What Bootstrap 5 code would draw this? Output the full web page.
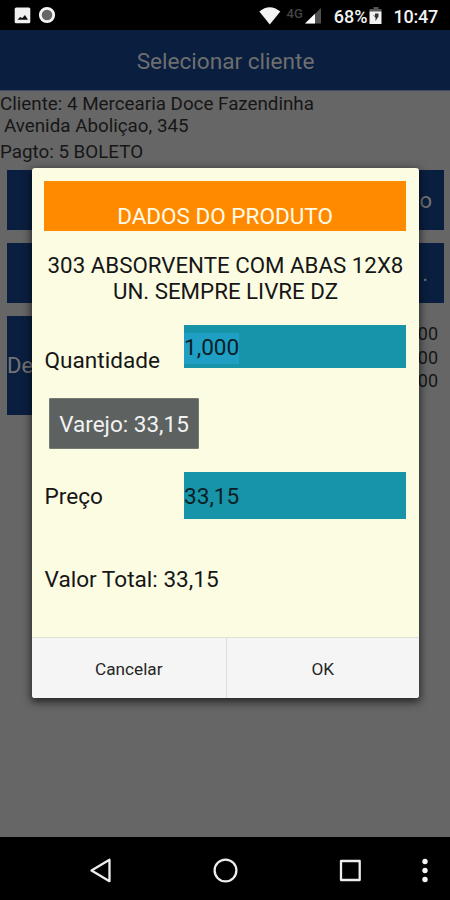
<!DOCTYPE html>
<html lang="pt-BR">
<head>
<meta charset="utf-8">
<meta name="viewport" content="width=device-width, initial-scale=1">
<title>Selecionar cliente</title>
<link href="https://cdn.jsdelivr.net/npm/bootstrap@5.3.0/dist/css/bootstrap.min.css" rel="stylesheet">
<style>
  body { font-family: Roboto, "Liberation Sans", sans-serif; background: #666; color: #161616; }
  .phone { width: 450px; height: 900px; background: #666; }
  .status-bar { height: 30px; padding: 0 12px 0 14px; background: #000; color: #f2f2f2; }
  .clock-text { font-size: 18px; font-weight: 500; line-height: 30px; padding-top: 2px; }
  .clock-text:last-child { letter-spacing: -.25px; }
  .net-label { font-size: 13px; font-weight: 500; line-height: 12px; color: #454545; margin-left: -4px; }
  .app-bar { height: 60px; background: #0a1f40; color: #6e6e6e; font-size: 22.6px; padding: 3px 0 0 1px; box-shadow: 0 1px 0 #3c4a68; }
  .client-info { height: 80px; padding: 3px 0 0 0; font-size: 18.8px; line-height: 22px; }
  .action-list { padding: 0 6px 0 7px; gap: 13px; }
  .blue-btn { height: 60px; background: #0a1f40; color: #737373; font-size: 22px; border-radius: 0; padding: 0; border: 0; }
  .blue-btn.tall { height: 99px; }
  .totals { font-size: 18px; line-height: 23.7px; padding: 6px 6px 0 0; }
  .nav-keys { height: 63px; background: #000; }
  .dialog-box { left: 32px; top: 168px; width: 387px; height: 530px; background: #fcfce3; border-radius: 3px; box-shadow: 0 3px 9px 1px rgba(0,0,0,.65); overflow: hidden; font-size: 22.6px; }
  .dialog-main { padding: 13px 13px 0 12px; height: 469px; }
  .dialog-title { height: 50px; background: #ff8a00; color: #fffbe8; font-size: 22.5px; line-height: 28px; padding-bottom: 1px; }
  .product-name { font-size: 22.3px; line-height: 26px; margin-top: 21px; padding-left: 1px; }
  .field-label { width: 140px; padding-left: .5px; }
  .field-box { background: #1894a8; color: #082024; line-height: 1; padding-top: 4px; }
  .qty-row { height: 43px; margin-top: 21px; }
  .qty-row .field-label { padding-top: 28px; }
  .picked { background: #209fc4; padding: 4px 0 4px; }
  .price-tag { width: 150px; height: 51px; margin: 30px 0 0 5px; background: #5d6260; color: #f2f2f2; border-radius: 1px; font-size: 22.5px; padding: 2px 0 0; border: 1px solid #747972; }
  .price-row { height: 47px; margin-top: 23px; }
  .price-row .field-label { padding-top: 3px; }
  .total-line { margin-top: 45px; line-height: 32px; padding-left: .5px; }
  .dialog-actions { height: 61px; background: #f5f5f5; border-top: 1px solid #dfe0d1; font-size: 17.2px; }
  .dialog-actions button { background: transparent; border: 0; color: #252525; padding-top: 4px; }
  .dialog-actions button + button { border-left: 1px solid #dedede; }
</style>
<script src="https://cdn.jsdelivr.net/npm/bootstrap@5.3.0/dist/js/bootstrap.bundle.min.js"></script>
</head>
<body>
<div class="phone position-relative d-flex flex-column overflow-hidden">
  <div class="status-bar d-flex justify-content-between">
    <svg width="44" height="30" viewBox="14 0 44 30">
      <rect x="14.7" y="7.5" width="15.6" height="15.7" rx="1.5" fill="#f0f0f0"/>
      <path d="M17.500 19.800l2.500-2.800 2.300 1 2.700-3 3 4.800z" fill="#111"/>
      <circle cx="47" cy="15" r="6.700" fill="#666" stroke="#f5f5f5" stroke-width="2.800"/>
    </svg>
    <div class="d-flex">
      <svg width="29" height="30" viewBox="258 0 29 30"><path d="M259.300 11.500Q269.700 3 280.300 11.500L269.800 24.500Z" fill="#f3f3f3"/></svg>
      <span class="net-label ps-1 pt-2">4G</span>
      <svg width="31" height="30" viewBox="304 0 31 30"><path d="M306 23.500L322 8V23.500Z" fill="#505050"/><path d="M306 23.500L316 13.800V23.500Z" fill="#fff"/></svg>
      <span class="clock-text">68%</span>
      <svg width="26" height="30" viewBox="368.500 0 26 30"><path d="M370 9h4V7h5v2h3v3h-12z" fill="#555"/><path d="M370 11.500h12V24h-12z" fill="#f2f2f2"/><path d="M373 14.500l2.500 1.500v-2.500h3.500v3l-3 4.500v-3.500z" fill="#333"/></svg>
      <span class="clock-text">10:47</span>
    </div>
  </div>
  <header class="app-bar d-flex align-items-center justify-content-center">Selecionar cliente</header>
  <div class="client-info">
    <div>Cliente: 4 Mercearia Doce Fazendinha</div>
    <div class="ps-1">Avenida Aboliçao, 345</div>
    <div class="pt-1">Pagto: 5 BOLETO</div>
  </div>
  <div class="action-list d-flex flex-column flex-grow-1">
    <button class="btn blue-btn w-100 text-end pe-2"><span class="pe-1">o</span></button>
    <button class="btn blue-btn w-100 text-end pe-3">.</button>
    <div class="d-flex justify-content-between">
      <button class="btn blue-btn tall w-50 text-start">De</button>
      <div class="totals text-end"><div>0,00</div><div>0,00</div><div>0,00</div></div>
    </div>
  </div>
  <nav class="nav-keys">
    <svg width="450" height="63" viewBox="0 837 450 63" fill="none" stroke="#ededed" stroke-width="2.300">
      <path d="M91.500 870.500L109.500 859.800V881.200Z" stroke-linejoin="round"/>
      <circle cx="225.500" cy="870.500" r="10.900"/>
      <rect x="341" y="861" width="18.700" height="19" stroke-linejoin="round"/>
      <g fill="#f5f5f5" stroke="none"><circle cx="425" cy="861.500" r="2.700"/><circle cx="425" cy="870.500" r="2.700"/><circle cx="425" cy="879.500" r="2.700"/></g>
    </svg>
  </nav>

  <section class="dialog-box position-absolute" role="dialog" aria-label="Dados do produto">
    <div class="dialog-main">
      <div class="dialog-title d-flex align-items-end justify-content-center">DADOS DO PRODUTO</div>
      <div class="product-name text-center text-nowrap">303 ABSORVENTE COM ABAS 12X8<br>UN. SEMPRE LIVRE DZ</div>
      <div class="qty-row d-flex align-items-center">
        <div class="field-label">Quantidade</div>
        <div class="field-box flex-grow-1 h-100 d-flex align-items-center"><span class="picked">1,000</span></div>
      </div>
      <button class="btn price-tag d-block">Varejo: 33,15</button>
      <div class="price-row d-flex align-items-center">
        <div class="field-label">Preço</div>
        <div class="field-box flex-grow-1 h-100 d-flex align-items-center">33,15</div>
      </div>
      <div class="total-line">Valor Total: 33,15</div>
    </div>
    <div class="dialog-actions d-flex">
      <button class="w-50">Cancelar</button>
      <button class="w-50">OK</button>
    </div>
  </section>
</div>
</body>
</html>
